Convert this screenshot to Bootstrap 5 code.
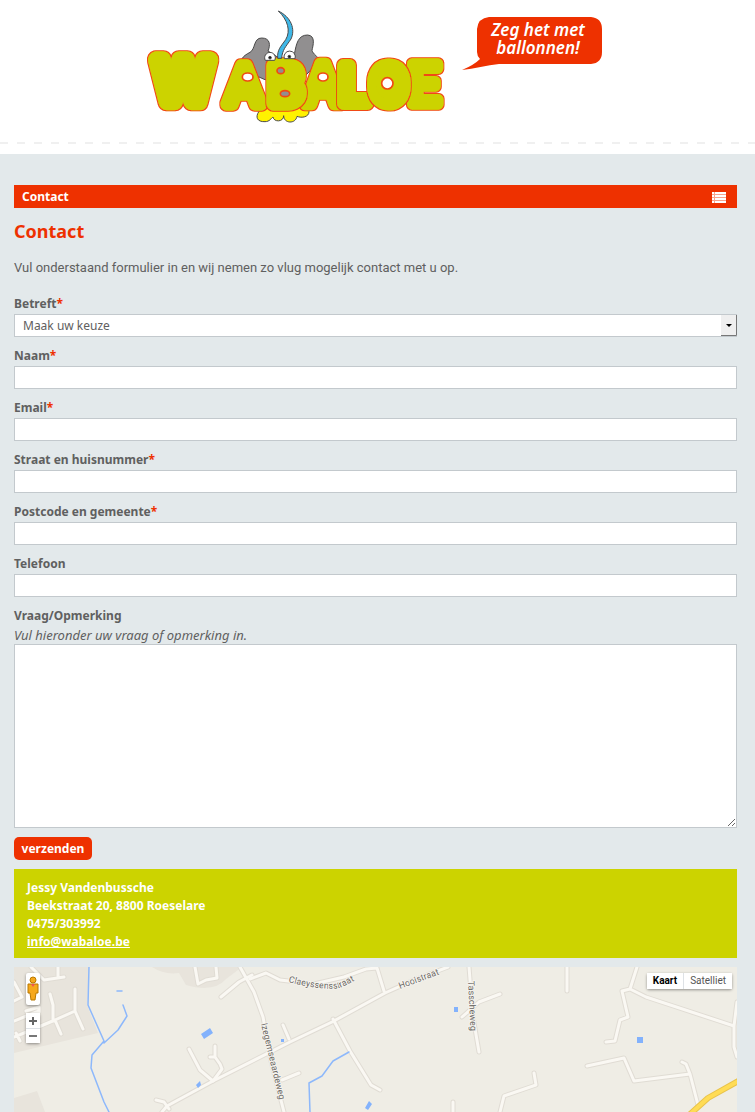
<!DOCTYPE html>
<html lang="nl">
<head>
<meta charset="utf-8">
<meta name="viewport" content="width=device-width, initial-scale=1">
<title>Contact - Wabaloe</title>
<link href="https://cdn.jsdelivr.net/npm/bootstrap@5.3.0/dist/css/bootstrap.min.css" rel="stylesheet">
<style>
  :root { --red: #ee3100; --lime: #ccd300; --ink: #5f6060; --line: #c3c9cd; }
  body { font-family: "Noto Sans", "Open Sans", sans-serif; font-size: 12px; line-height: 18px; color: var(--ink); background: #e3e9eb; }
  .site-head { background: #fff; padding-top: 8px; height: 154px; }
  .dashes { height: 2px; margin-top: 18px; background: repeating-linear-gradient(90deg, #f0f0f0 0 8px, #fff 8px 17px); }
  .logo { width: 301px; height: 116px; display: block; }
  .slogan { width: 141px; height: 56px; margin-top: 8px; display: block; }
  .page-main { padding: 31px 18px 0 14px; }
  .bar { background: var(--red); height: 23px; padding: 1px 11px 0 8px; }
  .bar a { color: #fff; font-weight: 700; text-decoration: none; }
  .menu-btn { background: none; border: 0; padding: 0; line-height: 0; }
  h1 { font-size: 18px; line-height: 24px; font-weight: 700; color: var(--red); margin: 11px 0 0; }
  .intro { margin: 16px 0; font-family: Roboto, "Noto Sans", sans-serif; font-size: 13px; }
  .field label { display: block; font-weight: 700; line-height: 21px; }
  .field em { font-size: 13px; }
  .field + .field { margin-top: 8px; }
  .req { color: var(--red); }
  .field .form-control, .field .form-select { height: 23px; min-height: 23px; padding: 0 8px; font-size: 12px; line-height: 20px; color: var(--ink); border: 1px solid var(--line); border-radius: 0; background: #fff; }
  .field .form-select { padding-top: 1px; }
  .field textarea.form-control { height: 184px; display: block; }
  .arrow { top: 1px; right: 0; width: 16px; height: 21px; pointer-events: none; }
  .send { background: var(--red); color: #fff; border: 0; border-radius: 5px; height: 23px; width: 78px; padding: 0; margin: 9px 0; font-size: 12px; line-height: 24px; font-weight: 700; }
  .address { background: var(--lime); color: #fff; font-weight: 700; padding: 10px 13px 7px; margin-bottom: 9px; }
  .address a { color: #fff; }
  .map { min-height: 145px; background: #efede5; font-family: Roboto, sans-serif; }
  .map > svg { width: 100%; height: 100%; left: 0; top: 0; }
  .map button { background: #fff; border: 0; padding: 0; color: #555; line-height: 16px; }
  .ctl { background: #fff; box-shadow: 0 1px 3px rgba(0,0,0,.4); border-radius: 2px; }
  .tools { left: 12px; top: 6px; width: 14px; }
  .types { right: 5px; top: 6px; font-size: 10px; }
  .types button { padding: 0 6px; }
</style>
</head>
<body class="d-flex flex-column min-vh-100">
<header class="site-head">
  <div class="d-flex justify-content-center align-items-start gap-3 pe-2">
    <a href="#" aria-label="Wabaloe">
    <svg class="logo" viewBox="30 25 903 348">
      <defs>
        <filter id="outline" x="-30%" y="-30%" width="160%" height="160%">
          <feMorphology in="SourceAlpha" operator="dilate" radius="4" result="fat"/>
          <feFlood flood-color="#f04a12"/>
          <feComposite in2="fat" operator="in" result="edge"/>
          <feMerge><feMergeNode in="edge"/><feMergeNode in="SourceGraphic"/></feMerge>
        </filter>
      </defs>
      <g stroke="#4a4a4a" stroke-width="3" stroke-linejoin="round">
        <path fill="#918f90" d="M322 210C312 180 322 170 345 158C362 148 355 115 380 115C407 115 406 138 399 154L440 180L478 165C484 130 490 106 518 106C543 108 534 138 531 152C534 165 550 168 552 185L500 240H390Z"/>
        <path fill="#fff200" d="M372 335C360 352 366 367 390 366C404 366 408 356 414 352C416 368 446 368 446 348C446 372 482 374 486 350C500 356 522 352 522 336L515 315H385Z"/>
      </g>
      <path fill="#918f90" d="M415 195H450V300H415ZM480 205H512V240H480Z"/>
      <g fill="#ccd300" stroke="#ccd300" stroke-linejoin="round" stroke-linecap="round" font-family="Roboto">
        <text filter="url(#outline)" stroke-width="40" x="274" y="312" font-size="162">A</text>
        <text filter="url(#outline)" stroke-width="52" x="59" y="308" font-size="172" font-family="DejaVu Sans">W</text>
        <text filter="url(#outline)" stroke-width="38" x="510" y="313" font-size="164">A</text>
        <text filter="url(#outline)" stroke-width="46" x="404" y="309" font-size="156">B</text>
        <text filter="url(#outline)" stroke-width="42" x="614" y="309" font-size="156">L</text>
        <text filter="url(#outline)" stroke-width="34" x="819" y="314" font-size="168">E</text>
        <text filter="url(#outline)" stroke-width="42" x="708" y="310" font-size="156">O</text>
      </g>
      <ellipse cx="757" cy="254" rx="34" ry="42" fill="#ccd300"/>
      <g fill="#fff" stroke="#f04a12" stroke-width="5">
        <ellipse cx="338" cy="232" rx="16" ry="12"/><ellipse cx="564" cy="232" rx="15" ry="12"/><ellipse cx="757" cy="251" rx="17" ry="17"/>
        <ellipse fill="#918f90" cx="437" cy="213" rx="11" ry="9"/><ellipse fill="#918f90" cx="450" cy="282" rx="14" ry="9"/>
      </g>
      <g stroke="#4a4a4a" stroke-width="3" stroke-linejoin="round">
        <path fill="#3fb8e8" d="M430 34C468 52 482 88 468 118C452 142 442 150 440 176H428C426 150 438 140 452 120C468 94 458 60 430 34Z"/>
        <path fill="#fff" d="M391 182A16 16 0 1 1 419 182ZM448 177A17 17 0 1 1 480 177Z"/>
        <circle cx="405" cy="174" r="4" fill="#111"/><circle cx="463" cy="171" r="4" fill="#111"/>
      </g>
    </svg></a>
    <svg class="slogan" viewBox="0 0 141 56">
      <path fill="#ee3100" d="M27 1H129Q140 2 140 13V36Q140 47 129 48H37C25 49 12 53 0 54Q12 49 18 43Q15 40 15 36V13Q16 2 27 1Z"/>
      <g fill="#fff" font-family="Noto Sans" font-size="17" font-weight="600" font-style="italic" text-anchor="middle">
        <text x="76" y="20">Zeg het met</text><text x="76" y="38">ballonnen!</text>
      </g>
    </svg>
  </div>
  <div class="dashes"></div>
</header>

<main class="page-main d-flex flex-column flex-grow-1">
  <nav class="bar d-flex justify-content-between align-items-center">
    <a href="#">Contact</a>
    <button class="menu-btn" type="button" aria-label="Menu">
      <svg width="14" height="11" viewBox="0 0 14 11" fill="#fff"><path fill="#f9a38c" d="M0 0h14v11H0z"/><path d="M0 0h2v2H0zM3 0h11v2H3zM0 3h2v2H0zM3 3h11v2H3zM0 6h2v2H0zM3 6h11v2H3zM0 9h2v2H0zM3 9h11v2H3z"/></svg>
    </button>
  </nav>
  <h1>Contact</h1>
  <p class="intro">Vul onderstaand formulier in en wij nemen zo vlug mogelijk contact met u op.</p>

  <form>
    <div class="field">
      <label for="betreft">Betreft<span class="req">*</span></label>
      <div class="position-relative">
        <select class="form-select" id="betreft"><option>Maak uw keuze</option></select>
        <svg class="arrow position-absolute" viewBox="0 0 16 21"><path fill="#efefef" d="M0 0h16v21H0z"/><path fill="none" stroke="#777" d="M0 20.500h15.500V0"/><path d="M5 9h6l-3 3z"/></svg>
      </div>
    </div>
    <div class="field"><label for="naam">Naam<span class="req">*</span></label><input class="form-control" id="naam" type="text"></div>
    <div class="field"><label for="email">Email<span class="req">*</span></label><input class="form-control" id="email" type="email"></div>
    <div class="field"><label for="straat">Straat en huisnummer<span class="req">*</span></label><input class="form-control" id="straat" type="text"></div>
    <div class="field"><label for="gemeente">Postcode en gemeente<span class="req">*</span></label><input class="form-control" id="gemeente" type="text"></div>
    <div class="field"><label for="telefoon">Telefoon</label><input class="form-control" id="telefoon" type="tel"></div>
    <div class="field">
      <label for="vraag">Vraag/Opmerking</label>
      <em class="d-block" id="hint">Vul hieronder uw vraag of opmerking in.</em>
      <textarea class="form-control" id="vraag" aria-describedby="hint"></textarea>
    </div>
    <button class="send d-block" type="submit">verzenden</button>
  </form>

  <address class="address">Jessy Vandenbussche<br>Beekstraat 20, 8800 Roeselare<br>0475/303992<br><a href="mailto:info@wabaloe.be">info@wabaloe.be</a></address>

  <div class="map position-relative overflow-hidden flex-grow-1">
    <svg class="position-absolute" viewBox="0 0 723 145" preserveAspectRatio="xMinYMin slice" fill="none" stroke-linejoin="round" stroke-linecap="round">
      <path fill="#e8e4dc" d="M0 0H75L73 38L84 66L0 86ZM0 131L23 124L31 145H0ZM138 0Q150 8 165 6L172 18Q200 26 212 12L228 0Z"/>
      <defs>
        <g id="roads">
          <path d="M0 15L8 30L0 34M17 0L30 13L50 10M44 0V10M36 27L39 38V52M0 54L25 44M0 70L15 64L41 53L61 44L69 62M61 22V44M41 53L47 67M2 66L6 74M25 45V40L12 44"/>
          <path d="M181 0L184 17L192 13L203 11L202 0M207 30L225 15L238 8M226 0L240 25L249 50L257 94L270 145"/>
          <path d="M175 82L186 103L199 114L208 102L206 97L201 90V79M201 90L196 90"/>
          <path d="M148 145L153 139L199 114L276 75L318 55L371 26L400 13L434 0M236 12L252 6L266 13L300 17L330 10L352 2L363 1L370 24"/>
          <path d="M142 133L150 135L155 142M269 58L275 72M319 52L336 84L357 118L366 123M268 113L285 106"/>
          <path d="M455 0L459 50L465 85M448 50L465 35L486 27M439 135V145M486 145L490 129L522 118L520 106M553 0V24M623 0L616 22L608 24L614 50L606 53L601 74L592 75M616 22L632 30L720 59L723 35M720 59V80L723 90M573 99L610 91L620 114L676 107L672 97L668 95M676 107L684 138"/>
        </g>
      </defs>
      <use href="#roads" stroke="#e0dcd4" stroke-width="5"/>
      <use href="#roads" stroke="#faf8f3" stroke-width="3"/>
      <g stroke="#8db8fb" stroke-width="1.500"><path d="M75 0L74 38L90 74L78 88L77 101L90 135L95 145M109 38L113 49L104 63L90 76M335 85L319 94L308 109L295 116L296 145M103 24H108"/></g>
      <path fill="#83b2fc" d="M187 67L196 61L199 66L190 72ZM182 118L186 114L187 118L184 121ZM267 72h3v3h-3zM440 40h4v5h-4zM623 70h6v6h-6zM351 141L355 134L358 137L354 143Z"/>
      <path stroke="#e8c34c" stroke-width="6" d="M674 149L694 131L726 113"/><path stroke="#ffdc55" stroke-width="4" d="M674 149L694 131L726 113"/>
      <defs><path id="claey" d="M274 15Q308 24 326 21L350 9"/><path id="hooi" d="M386 22L434 4"/><path id="tas" d="M454 14L457 74"/><path id="izeg" d="M247 57L268 144"/></defs>
      <g fill="#6b6864" stroke="#f5f3ee" stroke-width="2" paint-order="stroke" font-size="9">
        <text><textPath href="#claey">Claeyssensstraat</textPath></text>
        <text><textPath href="#hooi">Hooistraat</textPath></text>
        <text><textPath href="#tas">Tasscheweg</textPath></text>
        <text><textPath href="#izeg">Izegemseaardeweg</textPath></text>
      </g>
    </svg>
    <div class="tools position-absolute">
      <div class="ctl mb-2 text-center">
        <svg class="d-block" width="14" height="32" viewBox="0 0 14 30" stroke="#b97900" fill="#f6a81c"><path d="M2 10H12L12 19H10L9 26H5L4 19H2Z"/><circle cx="7" cy="6" r="3"/><path d="M5 10L7 13L9 10Z" fill="#e55" stroke="none"/></svg>
      </div>
      <div class="ctl d-flex flex-column">
        <button type="button" aria-label="Inzoomen"><svg class="d-block mx-auto" width="14" height="15" stroke="#666" stroke-width="2"><path d="M3 8h8M7 4v8"/></svg></button>
        <button class="border-top" type="button" aria-label="Uitzoomen"><svg class="d-block mx-auto" width="14" height="14" stroke="#777" stroke-width="2"><path d="M3 7h8"/></svg></button>
      </div>
    </div>
    <div class="types ctl position-absolute d-flex">
      <button class="fw-bold text-black" type="button">Kaart</button><button class="border-start" type="button">Satelliet</button>
    </div>
  </div>
</main>
<script src="https://cdn.jsdelivr.net/npm/bootstrap@5.3.0/dist/js/bootstrap.bundle.min.js"></script>
</body>
</html>
